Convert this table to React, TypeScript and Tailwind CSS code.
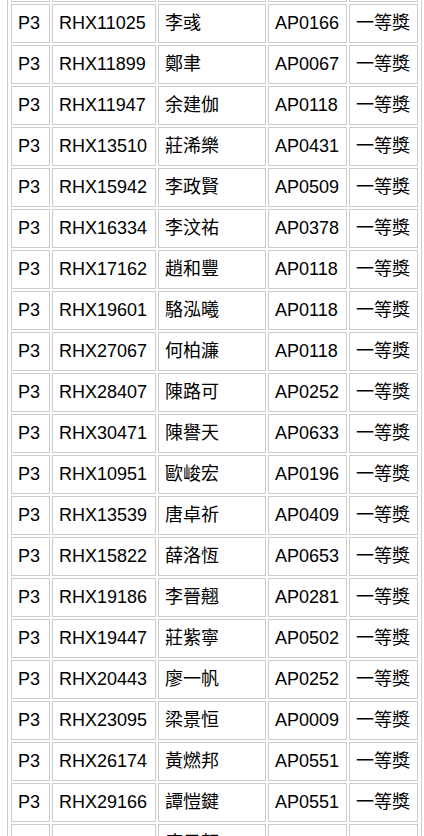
import React from 'react';

interface Winner {
  group: string;
  id: string;
  name: string;
  school: string;
  prize: string;
}

const rows: Winner[] = [
  { group: 'P3', id: 'RHX10877', name: '陳卓謙', school: 'AP0166', prize: '一等獎' },
  { group: 'P3', id: 'RHX11025', name: '李彧', school: 'AP0166', prize: '一等獎' },
  { group: 'P3', id: 'RHX11899', name: '鄭聿', school: 'AP0067', prize: '一等獎' },
  { group: 'P3', id: 'RHX11947', name: '余建伽', school: 'AP0118', prize: '一等獎' },
  { group: 'P3', id: 'RHX13510', name: '莊浠樂', school: 'AP0431', prize: '一等獎' },
  { group: 'P3', id: 'RHX15942', name: '李政賢', school: 'AP0509', prize: '一等獎' },
  { group: 'P3', id: 'RHX16334', name: '李汶祐', school: 'AP0378', prize: '一等獎' },
  { group: 'P3', id: 'RHX17162', name: '趙和豐', school: 'AP0118', prize: '一等獎' },
  { group: 'P3', id: 'RHX19601', name: '駱泓曦', school: 'AP0118', prize: '一等獎' },
  { group: 'P3', id: 'RHX27067', name: '何柏濂', school: 'AP0118', prize: '一等獎' },
  { group: 'P3', id: 'RHX28407', name: '陳路可', school: 'AP0252', prize: '一等獎' },
  { group: 'P3', id: 'RHX30471', name: '陳譽天', school: 'AP0633', prize: '一等獎' },
  { group: 'P3', id: 'RHX10951', name: '歐峻宏', school: 'AP0196', prize: '一等獎' },
  { group: 'P3', id: 'RHX13539', name: '唐卓祈', school: 'AP0409', prize: '一等獎' },
  { group: 'P3', id: 'RHX15822', name: '薛洛恆', school: 'AP0653', prize: '一等獎' },
  { group: 'P3', id: 'RHX19186', name: '李晉翹', school: 'AP0281', prize: '一等獎' },
  { group: 'P3', id: 'RHX19447', name: '莊紫寧', school: 'AP0502', prize: '一等獎' },
  { group: 'P3', id: 'RHX20443', name: '廖一帆', school: 'AP0252', prize: '一等獎' },
  { group: 'P3', id: 'RHX23095', name: '梁景恒', school: 'AP0009', prize: '一等獎' },
  { group: 'P3', id: 'RHX26174', name: '黃燃邦', school: 'AP0551', prize: '一等獎' },
  { group: 'P3', id: 'RHX29166', name: '譚愷鍵', school: 'AP0551', prize: '一等獎' },
  { group: 'P3', id: 'RHX30125', name: '唐子軒', school: 'AP0551', prize: '' },
];

// celda comun de la tabla
const cell = 'h-[39px] border border-[#cccccc] px-[6px] py-0 align-middle leading-[37px] whitespace-nowrap';

export default function App() {
  return (
    <div
      className="h-[836px] w-[424px] overflow-hidden bg-white text-[18px] text-black"
      style={{ fontFamily: '"Liberation Sans", "Noto Sans CJK TC", sans-serif' }}
    >
      <table className="ml-[7px] mt-[-41px] table-fixed border-separate border-spacing-[2px] border border-[#cccccc] p-px text-left">
        <colgroup>
          <col className="w-[39px]" />
          <col className="w-[104px]" />
          <col className="w-[108px]" />
          <col className="w-[79px]" />
          <col className="w-[69px]" />
        </colgroup>
        <tbody>
          {rows.map((r) => (
            <tr key={r.id}>
              <td className={cell}>{r.group}</td>
              <td className={cell}>{r.id}</td>
              <td className={cell}>{r.name}</td>
              <td className={cell}>{r.school}</td>
              <td className={cell}>{r.prize}</td>
            </tr>
          ))}
        </tbody>
      </table>
    </div>
  );
}
